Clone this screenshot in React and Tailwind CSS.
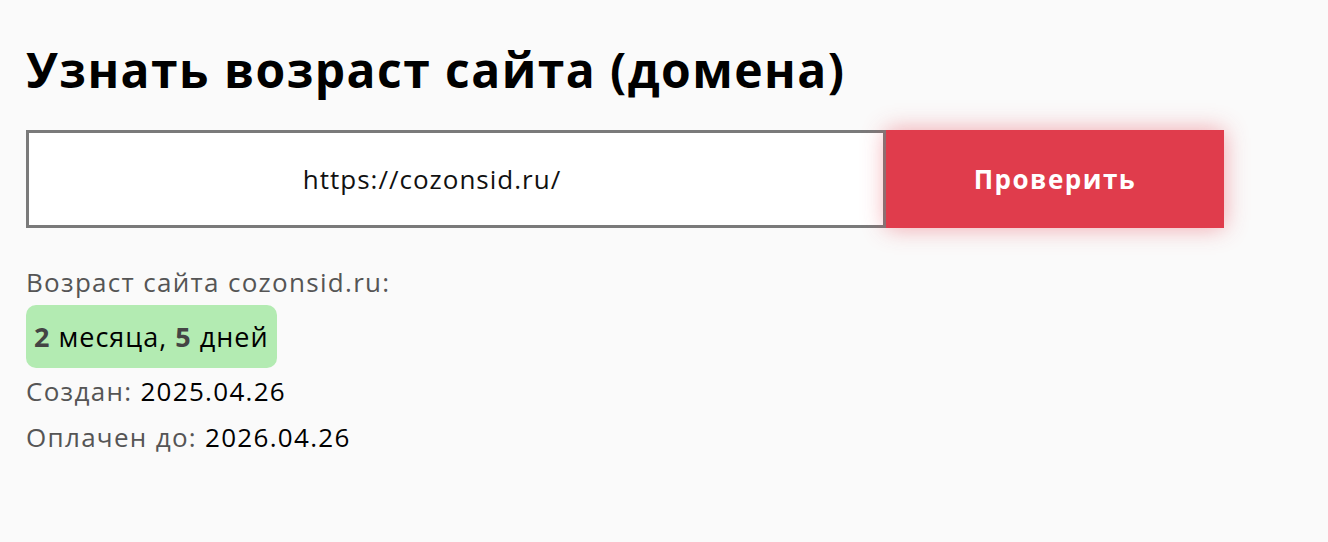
export default function App() {
  return (
    <div
      className="min-h-screen bg-[#fafafa] px-[26px] pt-[36px]"
      style={{ fontFamily: '"Open Sans", "DejaVu Sans", sans-serif' }}
    >
      <h1 className="text-[48px] font-bold leading-[68px] tracking-[1.45px] text-black">
        Узнать возраст сайта (домена)
      </h1>

      <div className="mt-[26px] flex w-[1198px]">
        <input
          defaultValue="https://cozonsid.ru/"
          className="h-[98px] flex-1 border-[3px] border-[#7a7a7a] bg-white pr-[48px] text-center text-[26px] tracking-[1px] text-[#111] outline-none"
        />
        <button className="h-[98px] w-[338px] bg-[#e03c4c] text-[26px] font-bold tracking-[1.5px] text-white shadow-[0_0_22px_rgba(230,60,76,0.45)]">
          Проверить
        </button>
      </div>

      <div className="mt-[31px] text-[26px] leading-[46px] tracking-[1.3px]">
        <div className="text-[#555]">Возраст сайта cozonsid.ru:</div>
        <div className="inline-block rounded-[10px] bg-[#b3ebb2] px-[8px] py-[8px] text-[27px] leading-[47px] tracking-[1px] text-black">
          <b className="text-[#444]">2</b> месяца, <b className="text-[#444]">5</b> дней
        </div>
        <div className="text-[#555]">
          Создан: <span className="text-black">2025.04.26</span>
        </div>
        <div className="text-[#555]">
          Оплачен до: <span className="text-black">2026.04.26</span>
        </div>
      </div>
    </div>
  );
}
